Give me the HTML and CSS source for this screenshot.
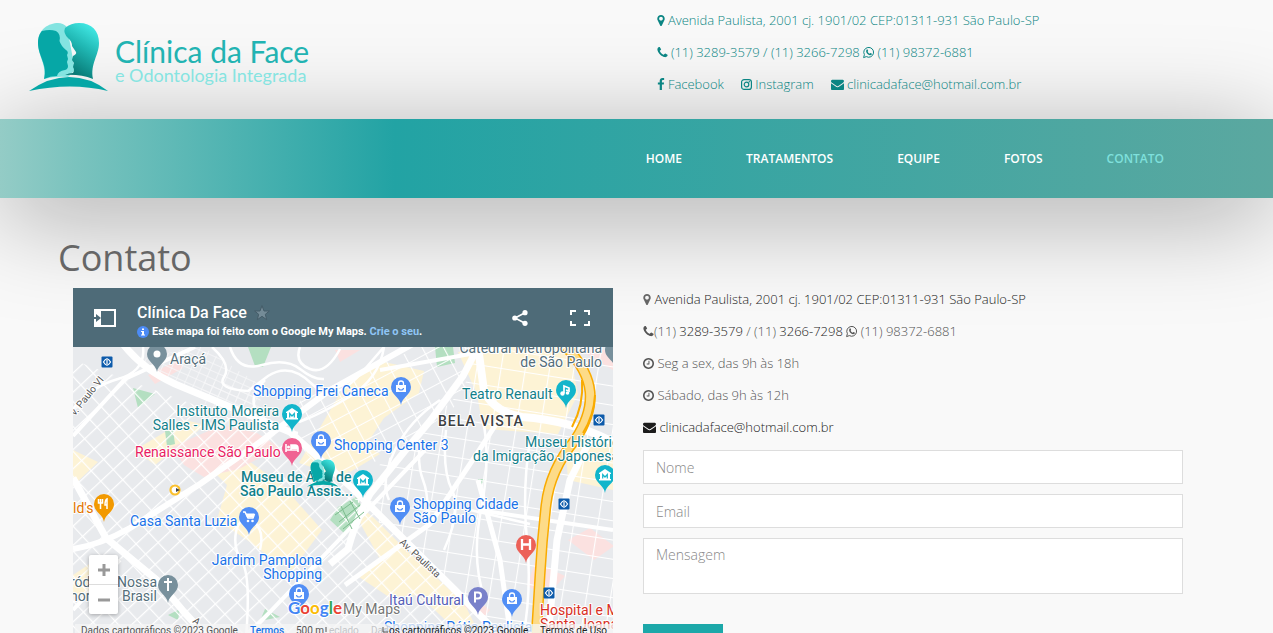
FILE: index.html
```html
<!DOCTYPE html>
<html lang="pt-BR">
<head>
<meta charset="utf-8">
<meta name="viewport" content="width=device-width, initial-scale=1">
<title>Clínica da Face - Contato</title>
<link rel="stylesheet" href="styles.css">
</head>
<body>
<svg class="defs" aria-hidden="true">
  <defs>
    <symbol id="marker" viewBox="384 0 1024 1792"><path d="M1152 640q0-106-75-181t-181-75-181 75-75 181 75 181 181 75 181-75 75-181zm256 0q0 109-33 179l-364 774q-16 33-47.500 52t-67.500 19-67.500-19-46.500-52l-365-774q-33-70-33-179 0-212 150-362t362-150 362 150 150 362z"/></symbol>
    <symbol id="phone" viewBox="192 0 1408 1792"><path d="M1600 1240q0 27-10 70.500t-21 68.500q-21 50-122 106-94 51-186 51-27 0-53-3.500t-57.500-12.500-47-14.500-55.500-20.500-49-18q-98-35-175-83-127-79-264-216t-216-264q-48-77-83-175-3-9-18-49t-20.500-55.500-14.500-47-12.500-57.500-3.500-53q0-92 51-186 56-101 106-122 25-11 68.500-21t70.500-10q14 0 21 3 18 6 53 76 11 19 30 54t35 63.500 31 53.500q3 4 17.500 25t21.500 35.500 7 28.500q0 20-28.500 50t-62 55-62 53-28.500 46q0 9 5 22.500t8.500 20.500 14 24 11.500 19q76 137 174 235t235 174q2 1 19 11.500t24 14 20.500 8.500 22.500 5q18 0 46-28.500t53-62 55-62 50-28.500q14 0 28.500 7t35.500 21.500 25 17.500q25 15 53.500 31t63.500 35 54 30q70 35 76 53 3 7 3 21z"/></symbol>
    <symbol id="clock" viewBox="128 0 1536 1792"><path d="M1024 544v448q0 14-9 23t-23 9h-320q-14 0-23-9t-9-23v-64q0-14 9-23t23-9h224v-352q0-14 9-23t23-9h64q14 0 23 9t9 23zm416 352q0-148-73-273t-198-198-273-73-273 73-198 198-73 273 73 273 198 198 273 73 273-73 198-198 73-273zm224 0q0 209-103 385.500t-279.500 279.500-385.500 103-385.500-103-279.500-279.500-103-385.500 103-385.500 279.500-279.500 385.500-103 385.500 103 279.500 279.500 103 385.500z"/></symbol>
    <symbol id="envelope" viewBox="0 0 1792 1792"><path d="M1792 710v794q0 66-47 113t-113 47h-1472q-66 0-113-47t-47-113v-794q44 49 101 87 362 246 497 345 57 42 92.500 65.500t94.500 48 110 24.500h2q51 0 110-24.500t94.500-48 92.500-65.500q170-123 498-345 57-39 100-87zm0-294q0 79-49 151t-122 123q-376 261-468 325-10 7-42.500 31t-54 38.500-52 32.500-57.500 27-50 9h-2q-23 0-50-9t-57.500-27-52-32.500-54-38.500-42.500-31q-91-64-262-182.500t-205-142.500q-62-42-117-115.500t-55-136.500q0-78 41.500-130t118.500-52h1472q65 0 112.500 47t47.500 113z"/></symbol>
    <symbol id="facebook" viewBox="400 0 1024 1792"><path d="M1343 12v264h-157q-86 0-116 36t-30 108v189h293l-39 296h-254v759h-306v-759h-255v-296h255v-218q0-186 104-288.500t277-102.500q147 0 228 12z"/></symbol>
    <symbol id="instagram" viewBox="0 0 11 13"><rect x=".6" y="1.600" width="9.800" height="9.800" rx="2.500" fill="none" stroke="currentColor" stroke-width="1.200"/><circle cx="5.500" cy="6.500" r="2.300" fill="none" stroke="currentColor" stroke-width="1.200"/><circle cx="8.300" cy="3.700" r=".7"/></symbol>
    <symbol id="whatsapp" viewBox="0 0 11 13"><path d="M.6 11.600l.8-2.900a4.900 4.900 0 1 1 1.900 1.900z" fill="none" stroke="currentColor" stroke-width="1"/><path d="M3.600 3.700c.6-.6 1-.3 1.200.3l.4 1-.6.8c.5 1 1.200 1.500 2 1.900l.8-.8 1.200.6c.5.3.3.9-.1 1.300-1 .9-2.600.3-3.900-.9C3.200 6.700 2.600 4.900 3.600 3.700z"/></symbol>
    <path id="pin" d="M0 18C-1 10-10 8-10 0A10 10 0 0 1 10 0C10 8 1 10 0 18z"/>
    <g id="bag"><path d="M-5-2h10v7h-10z" fill="#fff"/><path d="M-2.500-2v-1.500a2.500 2.500 0 0 1 5 0V-2" fill="none" stroke="#fff" stroke-width="1.300"/><path d="M-2.500 1a2.500 2 0 0 0 5 0" fill="none" stroke="#518ef5" stroke-width="1.200"/></g>
    <g id="museum"><path d="M-6-2L0-6 6-2V-1H-6zM-5-1h10v5h-10zM-6 4h12v1.500h-12z" fill="#fff"/><path d="M-2.300 3.500v-4L0 2 2.300-.5v4" fill="none" stroke="#12b5cb" stroke-width="1.200"/></g>
    <g id="metro"><rect x="-5.500" y="-5.500" width="11" height="11" rx="1" fill="#0d5bab"/><path d="M0-4v8M-1.200-3L-3.500 0l2.300 3M1.200-3L3.500 0 1.200 3" fill="none" stroke="#fff" stroke-width="1.200"/></g>
    <linearGradient id="faceLight" x1=".8" y1="0" x2=".4" y2="1"><stop offset="0" stop-color="#45eeea"/><stop offset=".45" stop-color="#20b7b3"/><stop offset="1" stop-color="#04736f"/></linearGradient>
    <symbol id="faces" viewBox="29 22 80 70">
      <path d="M44 79C47 65 38 56 38 43C38 29 49 23 58 23Q63 23 67 27L75 70L68 77Q55 76 44 79z" fill="#84e4e1"/>
      <path d="M44 79C48 65 38 56 38 43C38 37 40 33 42 31Q50 29 56 31Q61 34 59.500 41Q61 46 66 50Q69 52 67 55L68 59L67 62L68 66Q68 69 65 70Q58 71 57 76Q50 76 44 79z" fill="#06a7a6"/>
      <path d="M65 28Q71 23 79 23C92 23 99 31 99 43C99 55 90 64 93 79Q80 74 65 75Q69 73 73 73Q75 70 73 67L74 63L72 60L73 56Q77 54 76 52L72 46Q72 41 68 38Q63 33 65 28z" fill="url(#faceLight)"/>
      <path d="M29 91Q49 77 69 77Q90 77 108 91Q71 82 29 91z" fill="#06a7a6"/>
    </symbol>
    <pattern id="blocks" width="17" height="14" patternUnits="userSpaceOnUse" patternTransform="rotate(-43)"><path d="M0 0H17M0 0V14" stroke="#fff" stroke-width="2.400"/></pattern>
    <pattern id="blocksTilt" width="19" height="16" patternUnits="userSpaceOnUse" patternTransform="rotate(-28)"><path d="M0 0H19M0 0V16" stroke="#fff" stroke-width="2.200"/></pattern>
    <pattern id="blocksTight" width="9" height="7" patternUnits="userSpaceOnUse" patternTransform="rotate(24)"><path d="M0 0H9M0 0V7" stroke="#f7f8f9" stroke-width="1.500"/></pattern>
    <pattern id="blocksUpright" width="24" height="19" patternUnits="userSpaceOnUse" patternTransform="rotate(9)"><path d="M0 0H24M0 0V19" stroke="#fff" stroke-width="2.200"/></pattern>
  </defs>
</svg>

<header class="top">
  <a class="brand" href="#">
    <svg class="brand-mark" aria-hidden="true"><use href="#faces"/></svg>
    <span class="brand-text"><span class="brand-name">Clínica da Face</span><span class="brand-sub">e Odontologia Integrada</span></span>
  </a>
  <div class="top-info">
    <p class="line"><svg class="icon slim"><use href="#marker"/></svg> Avenida Paulista, 2001 cj. 1901/02 CEP:01311-931 São Paulo-SP</p>
    <p class="line"><svg class="icon"><use href="#phone"/></svg> (11) 3289-3579 / (11) 3266-7298 <svg class="icon"><use href="#whatsapp"/></svg> (11) 98372-6881</p>
    <p class="line social"><a href="#"><svg class="icon slim"><use href="#facebook"/></svg> Facebook</a><a href="#"><svg class="icon"><use href="#instagram"/></svg> Instagram</a><a href="#"><svg class="icon wide"><use href="#envelope"/></svg> clinicadaface@hotmail.com.br</a></p>
  </div>
</header>

<nav class="menu">
  <a href="#">HOME</a><a href="#">TRATAMENTOS</a><a href="#">EQUIPE</a><a href="#">FOTOS</a><a class="active" href="#">CONTATO</a>
</nav>

<main class="page">
  <h1 class="title">Contato</h1>
  <div class="columns">
    <section class="map" aria-label="Mapa">
      <div class="map-head">
        <button class="map-btn" aria-label="Legenda"><svg width="24" height="20" viewBox="0 0 24 20"><path d="M1 1h7v18H1z" fill="#fff"/><path d="M8 2h14v16H8" fill="none" stroke="#fff" stroke-width="2"/><path d="M0 9h3V6l5 4-5 4v-3H0z" fill="#4e6b78"/></svg></button>
        <div class="map-info">
          <h2 class="map-title">Clínica Da Face <svg width="16" height="16" viewBox="0 0 24 24"><path d="M12 1l3 8h8l-6 5 2 8-7-5-7 5 2-8-6-5h8z" fill="#748b97" stroke="#455c68" stroke-width="1.500"/></svg></h2>
          <p class="map-note"><svg width="12" height="12" viewBox="0 0 12 12"><circle cx="6" cy="6" r="6" fill="#4c8bf5"/><path d="M5 2.500h2v1.500H5zM4 5h3v3.500h1v1H4v-1h1V6H4z" fill="#fff"/></svg><span>Este mapa foi feito com o Google My Maps. <a href="#">Crie o seu</a>.</span></p>
        </div>
        <button class="map-btn" aria-label="Compartilhar"><svg width="16" height="16" viewBox="0 0 16 16"><path d="M13 2.700L3 8l10 5.300" fill="none" stroke="#fff" stroke-width="1.600"/><circle cx="13" cy="2.700" r="2.600" fill="#fff"/><circle cx="2.800" cy="8" r="2.600" fill="#fff"/><circle cx="13" cy="13.300" r="2.600" fill="#fff"/></svg></button>
        <button class="map-btn" aria-label="Tela cheia"><svg width="20" height="16" viewBox="0 0 20 16"><path d="M1 5V1h5M14 1h5v4M19 11v4h-5M6 15H1v-4" fill="none" stroke="#fff" stroke-width="2"/></svg></button>
      </div>
      <div class="map-body">
        <svg class="map-canvas" viewBox="73 347 540 291" preserveAspectRatio="xMinYMin slice">
          <rect x="73" y="347" width="540" height="291" fill="#e8eaed"/>
          <g fill="#fdf3d5">
            <path d="M200 458l20-18 62 45 40 45-30 40-25-15-20-15-30-20 10-35z"/>
            <path d="M345 385l35-24 44 10-5 22-35 25-40 60-45-15z"/>
            <path d="M458 352l60-8 50 0 10 50-20 40-75-5-6-35z"/>
            <path d="M352 500l22 18 30 30 60 55 20 40-25-10-40-38-30 2-30-20 22-16-22-40zM73 450l25 12-25 24zM135 450l50-30 20 5-50 40zM73 575l18-12 10 26-28 8zM565 440h48v50l-45-10zM330 450l30-8 20 12-30 18z"/>
          </g>
          <g fill="#fbe1e0"><path d="M172 447l50-22 35 8 22 14-40 22-35 8-20-12zM148 375l30-15 5 8-28 16zM535 562l30 14-18 20-20-10zM568 540l22-12 24 18-20 14zM335 350l25 0-20 12zM580 350h33v20zM470 595l20 15-8 10-18-14z"/></g>
          <g fill="#b4dfc1"><path d="M248 347h23l-8 20-8-1zM435 347h18l2 16-18 4zM133 388l22 6-17 14zM165 431l8-1 2 14-8 2zM338 507l18-10 10 16-20 22-16-15zM478 479h8l-7 8zM168 615l12-6-2 11zM265 609l15 8-20 4z"/></g>
          <path d="M73 360L290 440L340 480L500 638H73z" fill="url(#blocks)"/>
          <path d="M140 360L200 345L260 385L250 405L170 385z" fill="url(#blocksTight)"/>
          <path d="M205 380L260 390L262 425L200 403z" fill="url(#blocksTight)"/>
          <path d="M300 400L420 347H475L463 400L400 450L340 478L290 440z" fill="url(#blocksTilt)"/>
          <path d="M345 490L400 450L463 390L478 347H613V638H500z" fill="url(#blocksUpright)"/>
          <g fill="none" stroke="#fff" stroke-width="2.500">
            <path d="M212 347q20 18 12 30t24 14l20-15q22-14 44 8t52-14l20-23M230 347q8 25 32 18t38 4 24 10M265 380q-20 20-5 35t38 18M300 347q-6 16 10 22t30-20M260 550q5-22-8-28t-16 10 6 30 4 76M143 347q3 24-25 32t-45 30M384 347q-5 32-35 50t-50 25M440 400q-30 20-45 50t-6 50M420 440q-3 25 3 40t4 40M446 430q-4 40 6 60t-8 60M470 510l60 14M483 420q8 40-2 90t4 90M530 440q-8 50-3 100t-4 98"/>
          </g>
          <g fill="none" stroke="#fff" stroke-width="7" stroke-linejoin="round">
            <path d="M120 340Q140 368 175 384L240 411L290 432L352 488L455 590L504 640"/>
            <path d="M73 549Q100 545 130 528L200 484L260 442L330 390L420 340" stroke-width="6"/>
            <path d="M73 478L106 538L158 581L184 612L210 640"/>
            <path d="M73 436L125 379L195 347" stroke-width="4"/>
            <path d="M330 564L348 549Q356 520 370 494L404 452L430 421L463 376L478 347"/>
            <path d="M478 347L484 391Q494 412 522 417Q570 420 613 442" stroke-width="8"/>
            <path d="M345 585L430 524L478 452L500 418" stroke-width="5"/>
            <path d="M478 480L500 560L511 638" stroke-width="5"/>
            <path d="M590 440L570 480L557 540L548 638"/>
            <path d="M478 510L613 530M245 638L425 450M73 610L120 560M380 370L510 347" stroke-width="4"/>
          </g>
          <g fill="none" stroke-linejoin="round">
            <path d="M566 347Q588 370 590 392T575 440Q550 470 546 505T540 575L536 640" stroke="#f9ab00" stroke-width="11"/>
            <path d="M566 347Q588 370 590 392T575 440Q550 470 546 505T540 575L536 640" stroke="#fddb88" stroke-width="8"/>
            <path d="M572 427Q584 405 582 380M595 395q-1 20-12 38" stroke="#f9ab00" stroke-width="2"/>
          </g>
          <g stroke="#7cbc8d" stroke-width="1" fill="none"><path d="M335 515l18-13M339 522l21-17M343 529l21-17M341 506l11 23M350 501l10 18"/></g>

          <g transform="translate(157 354)"><use href="#pin" fill="#78909c"/><circle r="3.500" fill="#fff"/></g>
          <g transform="translate(615 350)"><use href="#pin" fill="#78909c"/></g>
          <g transform="translate(401 387)"><use href="#pin" fill="#518ef5"/><use href="#bag"/></g>
          <g transform="translate(566 390)"><use href="#pin" fill="#12b5cb"/><path d="M-2 3v-7l5 2v3l-3-1" fill="none" stroke="#fff" stroke-width="1.700"/><circle cx="-3.500" cy="3.500" r="2.200" fill="#fff"/><circle cx="1.500" cy="3" r="1.800" fill="#fff"/></g>
          <g transform="translate(292 414)"><use href="#pin" fill="#12b5cb"/><use href="#museum"/></g>
          <g transform="translate(321 441)"><use href="#pin" fill="#518ef5"/><use href="#bag"/></g>
          <g transform="translate(292 448)"><use href="#pin" fill="#f06292"/><path d="M-6-4v8M-6 2H6v2V0Q6-3 3-3H-1V2" fill="none" stroke="#fff" stroke-width="1.600"/><path d="M-1-3h5q2 1 2 4h-7z" fill="#fff"/><circle cx="-3.500" cy="-1" r="1.500" fill="#fff"/></g>
          <g transform="translate(363 480)"><use href="#pin" fill="#12b5cb"/><use href="#museum"/></g>
          <g transform="translate(605 475)"><use href="#pin" fill="#12b5cb"/><use href="#museum"/></g>
          <g transform="translate(104 504)"><use href="#pin" fill="#f29900"/><path d="M-3.500-5v10M-5.500-5v4h4v-4M3 5v-10q-2 1-2 6h2" fill="none" stroke="#fff" stroke-width="1.500"/></g>
          <g transform="translate(249 517)"><use href="#pin" fill="#518ef5"/><path d="M-6-5h2l3 6h5l1.500-4" fill="none" stroke="#fff" stroke-width="1.500"/><path d="M-3.500-3.500h9L4 .5h-6z" fill="#fff"/><circle cx="-1" cy="4" r="1.300" fill="#fff"/><circle cx="3.500" cy="4" r="1.300" fill="#fff"/></g>
          <g transform="translate(400 507)"><use href="#pin" fill="#518ef5"/><use href="#bag"/></g>
          <g transform="translate(526 545)"><use href="#pin" fill="#ec6158"/><path d="M-4-6v11M4-6v11M-4-.5h8" stroke="#fff" stroke-width="2.300"/></g>
          <g transform="translate(168 585)"><use href="#pin" fill="#78909c"/><path d="M0-7v13M-4-3h8" stroke="#fff" stroke-width="2"/></g>
          <g transform="translate(299 594)"><use href="#pin" fill="#518ef5"/><use href="#bag"/></g>
          <g transform="translate(478 597)"><use href="#pin" fill="#7981ca"/><path d="M-3 5.500v-10h3a3 3 0 0 1 0 6h-3" fill="none" stroke="#fff" stroke-width="2"/></g>
          <g transform="translate(512 599)"><use href="#pin" fill="#518ef5"/><use href="#bag"/></g>
          <use href="#metro" x="107" y="362"/><use href="#metro" x="599" y="420"/><use href="#metro" x="564" y="504"/><use href="#metro" x="549" y="593"/>
          <g transform="translate(175 490)"><circle r="4.500" fill="#fff" stroke="#fbc02d" stroke-width="2.200"/><path d="M1-2l4 2-4 2z" fill="#444"/></g>

          <g class="lbl slate"><text x="170" y="364">Araçá</text><text x="602" y="353" text-anchor="end">Catedral Metropolitana</text><text x="602" y="367" text-anchor="end">de São Paulo</text><text x="70" y="587">ród</text><text x="117" y="587">Nossa</text><text x="70" y="601">hora</text><text x="122" y="601">Brasil</text></g>
          <g class="lbl blue"><text x="253" y="396">Shopping Frei Caneca</text><text x="334" y="450">Shopping Center 3</text><text x="413" y="509">Shopping Cidade</text><text x="413" y="523">São Paulo</text><text x="130" y="526">Casa Santa Luzia</text><text x="322" y="565" text-anchor="end">Jardim Pamplona</text><text x="322" y="579" text-anchor="end">Shopping</text><text x="384" y="632">Shopping Pátio Paulista</text></g>
          <g class="lbl teal"><text x="279" y="416" text-anchor="end">Instituto Moreira</text><text x="279" y="430" text-anchor="end">Salles - IMS Paulista</text><text x="462" y="399">Teatro Renault</text><text x="525" y="447">Museu Histórico</text><text x="473" y="461">da Imigração Japonesa</text></g>
          <g class="lbl teal strong"><text x="241" y="482">Museu de Arte de</text><text x="240" y="496">São Paulo Assis...</text></g>
          <g class="lbl pink"><text x="135" y="457">Renaissance São Paulo</text></g>
          <g class="lbl orange"><text x="73" y="513">ld's</text></g>
          <g class="lbl violet"><text x="389" y="605">Itaú Cultural</text></g>
          <g class="lbl red"><text x="540" y="615">Hospital e Maternidade</text><text x="540" y="629">Santa Joana</text></g>
          <text class="lbl district" x="438" y="426">BELA VISTA</text>
          <text class="lbl street" transform="translate(399 543) rotate(43)">Av. Paulista</text>
          <text class="lbl street" transform="translate(75 416) rotate(-51)">v. Paulo VI</text>
          <text class="lbl street" transform="translate(192 622) rotate(38)">A.</text>
          <use href="#faces" x="307" y="459" width="32" height="28"/>

          <text class="google" x="288" y="614"><tspan fill="#4285f4">G</tspan><tspan fill="#ea4335">o</tspan><tspan fill="#fbbc05">o</tspan><tspan fill="#4285f4">g</tspan><tspan fill="#34a853">l</tspan><tspan fill="#ea4335">e</tspan></text>
          <text class="mymaps" x="343" y="614">My Maps</text>
          <rect x="75" y="624" width="538" height="14" fill="#f5f5f5" opacity=".75"/>
          <g class="legal"><text x="81" y="634">Dados cartográficos ©2023 Google</text><a href="#"><text class="terms" x="250" y="634">Termos</text></a><text x="296" y="634">500 m</text><text class="faint" x="329" y="634">eclado</text><text class="faint" x="371" y="634">Dad</text><text class="dark" x="389" y="634">os cartográficos ©2023 Google</text><text class="dark" x="540" y="634">Termos de Uso</text></g>
          <path d="M326 627v5M383 627v5h5" stroke="#555" fill="none"/>
        </svg>
        <div class="zoom"><button aria-label="Aumentar zoom"><svg width="12" height="12" viewBox="0 0 12 12"><path d="M6 0v12M0 6h12" stroke="#999" stroke-width="3"/></svg></button><button aria-label="Diminuir zoom"><svg width="12" height="12" viewBox="0 0 12 12"><path d="M0 6h12" stroke="#999" stroke-width="3"/></svg></button></div>
      </div>
    </section>

    <section class="contact">
      <p class="line dark"><svg class="icon slim muted"><use href="#marker"/></svg> Avenida Paulista, 2001 cj. 1901/02 CEP:01311-931 São Paulo-SP</p>
      <p class="line"><svg class="icon"><use href="#phone"/></svg>(11) <span class="dark">3289-3579</span> / (11) <span class="dark">3266-7298</span> <svg class="icon"><use href="#whatsapp"/></svg> (11) 98372-6881</p>
      <p class="line"><svg class="icon"><use href="#clock"/></svg> Seg a sex, das 9h às 18h</p>
      <p class="line"><svg class="icon"><use href="#clock"/></svg> Sábado, das 9h às 12h</p>
      <p class="line"><a class="dark" href="#"><svg class="icon wide"><use href="#envelope"/></svg> clinicadaface@hotmail.com.br</a></p>
      <form class="form">
        <input class="field" type="text" placeholder="Nome" aria-label="Nome">
        <input class="field" type="email" placeholder="Email" aria-label="Email">
        <textarea class="field area" placeholder="Mensagem" aria-label="Mensagem"></textarea>
        <button class="send" type="submit" aria-label="Enviar"></button>
      </form>
    </section>
  </div>
</main>
</body>
</html>
```
FILE: styles.css
```css
* { box-sizing: border-box; }
html { scrollbar-width: none; }
body {
  margin: 0;
  background: #f9f9f9;
  color: #555;
  font: 300 13px/22px "Open Sans", sans-serif;
}
a { color: inherit; text-decoration: none; }
button { border: 0; padding: 0; background: none; }
.defs { display: block; width: 0; height: 0; }

.top {
  display: grid;
  grid-template-columns: 1fr 1fr;
  height: 119px;
  color: #0b8583;
}
.brand { display: flex; align-items: flex-start; gap: 6px; padding: 22px 0 0 29px; }
.brand-mark { width: 80px; height: 70px; }
.brand-text { display: flex; flex-direction: column; padding-top: 14px; font-family: Lato, sans-serif; white-space: nowrap; }
.brand-name { font-size: 30px; line-height: 30px; font-weight: 400; color: #22b3b2; }
.brand-sub { font-size: 18px; line-height: 18px; font-weight: 400; color: #86e4e1; }
.top-info { padding: 9px 0 0 20px; }
.line { margin: 0 0 10px; white-space: nowrap; }
.social { display: flex; gap: 17px; }
.icon { width: 11px; height: 13px; vertical-align: -2px; fill: currentColor; }
.icon.slim { width: 8px; }
.icon.wide { width: 13px; }

.menu {
  display: flex;
  justify-content: flex-end;
  align-items: center;
  gap: 64px;
  height: 79px;
  padding-right: 109px;
  background: linear-gradient(90deg, #94ccc6 0%, #7ac3be 6%, #22a3a4 31%, #5ba8a0 100%);
  box-shadow: 0 16px 100px rgba(0, 0, 0, .35);
  color: #fff;
  font-size: 12px;
  font-weight: 600;
}
.menu .active { color: #7fe0dc; }

.page { position: relative; padding: 40px 90px 0 58px; }
.title { margin: 0 0 10px; font-size: 36px; line-height: 40px; font-weight: 400; color: #666; }
.columns { display: grid; grid-template-columns: 1fr 1fr; gap: 30px; padding-left: 15px; }

.map { font-family: Roboto, sans-serif; }
.map-head {
  display: flex;
  align-items: center;
  height: 59px;
  padding: 0 23px 0 20px;
  background: #4e6b78;
  color: #fff;
}
.map-btn { display: flex; margin-left: 42px; }
.map-btn:first-child { margin: 0 20px 0 0; }
.map-info { flex: 1; }
.map-title { display: flex; align-items: center; gap: 7px; margin: 6px 0 0; font-size: 16px; line-height: 22px; font-weight: 500; }
.map-note { display: flex; align-items: center; gap: 3px; margin: 0; font-size: 11px; line-height: 16px; font-weight: 700; white-space: nowrap; }
.map-note a { color: #8fc5f5; }
.map-body { position: relative; }
.map-canvas { display: block; width: 100%; height: 291px; }

.lbl { font-family: Roboto, sans-serif; font-size: 14px; font-weight: 400; stroke: #fff; stroke-width: 2px; stroke-linejoin: round; paint-order: stroke; }
.slate { fill: #546e7a; }
.blue { fill: #1a73e8; }
.teal { fill: #12808a; }
.pink { fill: #e91e63; }
.orange { fill: #e37400; }
.violet { fill: #5660b8; }
.red { fill: #d93025; }
.strong { font-weight: 500; }
.district { fill: #3c4043; font-weight: 500; letter-spacing: 1px; }
.street { fill: #555; font-size: 10px; }
.google { font: 700 17px Lato, sans-serif; stroke: #fff; stroke-width: 2px; paint-order: stroke; }
.mymaps { font: 400 14px Roboto, sans-serif; fill: #757575; stroke: #fff; stroke-width: 2px; paint-order: stroke; }
.legal { font: 400 10px Roboto, sans-serif; fill: #555; }
.legal .terms { fill: #1a73e8; font-weight: 500; }
.legal .faint { fill: #c4c6c9; }
.legal .dark { fill: #222; }

.zoom {
  position: absolute;
  left: 16px;
  top: 208px;
  display: flex;
  flex-direction: column;
  width: 29px;
  border-radius: 2px;
  background: #fff;
  box-shadow: 0 1px 4px rgba(0, 0, 0, .3);
}
.zoom button { display: flex; align-items: center; justify-content: center; height: 29px; }
.zoom button + button { height: 30px; border-top: 1px solid #ddd; }

.dark { color: #1c1c1c; }
.muted { color: #666; }
.form { display: flex; flex-direction: column; align-items: flex-start; gap: 10px; padding-top: 2px; }
.field {
  display: block;
  width: 100%;
  height: 34px;
  padding: 6px 12px;
  border: 1px solid #ddd;
  border-radius: 0;
  background: #fff;
  font: 300 14px/20px "Open Sans", sans-serif;
  color: #555;
  resize: none;
}
.field::placeholder { color: #888; opacity: 1; }
.area { height: 56px; }
.send { width: 80px; height: 34px; margin-top: 20px; background: #1ca8a9; }
```
